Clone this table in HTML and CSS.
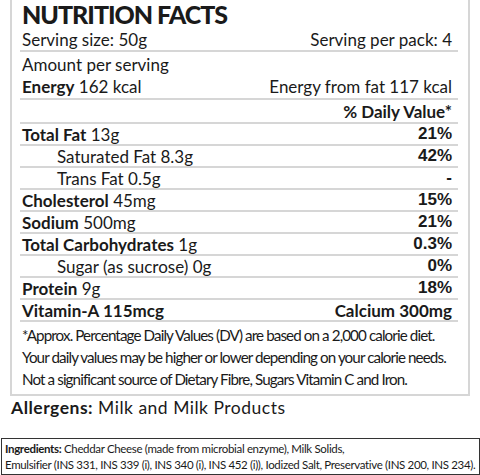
FILE: index.html
```html
<!DOCTYPE html>
<html lang="en">

<head>
    <meta charset="UTF-8">
    <meta name="viewport" content="width=device-width, initial-scale=1.0">
    <title>Nutrition Facts</title>
    <link rel="stylesheet" href="styles.css">
</head>

<body>
    <div class="label">
        <h1 class="title">NUTRITION FACTS</h1>
        <div class="row serving">
            <span>Serving size: 50g</span>
            <span>Serving per pack: 4</span>
        </div>
        <div class="amount">
            <div class="line">Amount per serving</div>
            <div class="line split">
                <span><b>Energy</b> 162 kcal</span>
                <span>Energy from fat 117 kcal</span>
            </div>
        </div>
        <div class="row dv"><b>% Daily Value*</b></div>
        <div class="row"><span><b>Total Fat</b> 13g</span><span class="pct">21%</span></div>
        <div class="row sub"><span>Saturated Fat 8.3g</span><span class="pct">42%</span></div>
        <div class="row sub"><span>Trans Fat 0.5g</span><span class="pct">-</span></div>
        <div class="row"><span><b>Cholesterol</b> 45mg</span><span class="pct">15%</span></div>
        <div class="row"><span><b>Sodium</b> 500mg</span><span class="pct">21%</span></div>
        <div class="row"><span><b>Total Carbohydrates</b> 1g</span><span class="pct">0.3%</span></div>
        <div class="row sub"><span>Sugar (as sucrose) 0g</span><span class="pct">0%</span></div>
        <div class="row"><span><b>Protein</b> 9g</span><span class="pct">18%</span></div>
        <div class="row"><b>Vitamin-A 115mcg</b><b>Calcium 300mg</b></div>
        <div class="notes">
            <p>*Approx. Percentage Daily Values (DV) are based on a 2,000 calorie diet.</p>
            <p>Your daily values may be higher or lower depending on your calorie needs.</p>
            <p>Not a significant source of Dietary Fibre, Sugars Vitamin C and Iron.</p>
        </div>
    </div>

    <p class="allergens"><b>Allergens:</b> Milk and Milk Products</p>

    <div class="ingredients">
        <p><b>Ingredients:</b> Cheddar Cheese (made from microbial enzyme), Milk Solids,</p>
        <p>Emulsifier (INS 331, INS 339 (i), INS 340 (i), INS 452 (i)), Iodized Salt, Preservative (INS 200, INS 234).</p>
    </div>
</body>

</html>
```

FILE: styles.css
```css
body {
    margin: 0;
    background: #fff;
    color: #1a1a1a;
    font-family: Lato, "Open Sans", sans-serif;
    font-size: 17px;
}

p {
    margin: 0;
}

.label {
    margin: 0 10px;
    border: 2px solid #d6d6d6;
    border-top: none;
    padding: 0 10px 0 8px;
}

.title {
    margin: 0;
    padding-left: 2px;
    font-size: 25px;
    line-height: 28px;
    font-weight: 900;
    letter-spacing: -1px;
}

.row {
    display: flex;
    justify-content: space-between;
    align-items: center;
    height: 20px;
    padding: 0 6px 0 2px;
    border-bottom: 2px solid #d6d6d6;
}

.serving {
    height: 22px;
}

.amount {
    padding: 2px 6px 0 2px;
    border-bottom: 2px solid #d6d6d6;
}

.amount .line {
    height: 22px;
    line-height: 22px;
}

.split {
    display: flex;
    justify-content: space-between;
}

.dv {
    justify-content: flex-end;
    height: 22px;
}

.sub {
    padding-left: 37px;
}

.pct {
    font-family: "Liberation Sans", Arial, sans-serif;
    font-weight: bold;
}

.notes {
    padding: 2px 2px 4px;
    font-size: 15.2px;
    line-height: 22px;
    letter-spacing: -0.9px;
    white-space: nowrap;
}

.allergens {
    margin: 0 11px;
    font-size: 17.5px;
    line-height: 24px;
    letter-spacing: 0.5px;
}

.ingredients {
    margin: 18px 0 0 1px;
    border: 1px solid #333;
    padding: 2px 3px 1px;
    font-size: 11.5px;
    line-height: 16px;
    letter-spacing: -0.34px;
    white-space: nowrap;
}
```
